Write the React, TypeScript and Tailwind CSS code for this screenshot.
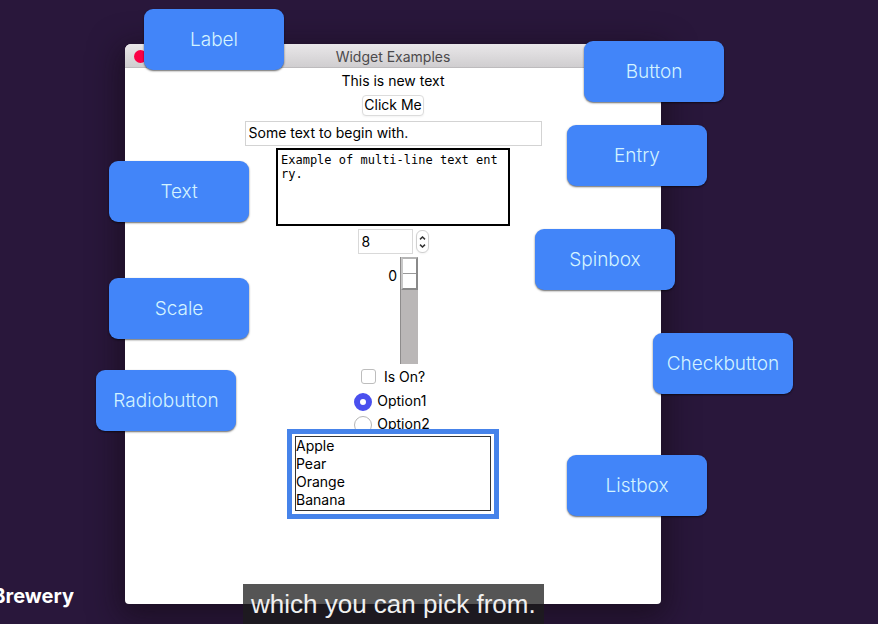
import { useState } from "react";

const tags = [
  { text: "Label", place: "left-[19px] top-[-35px]" },
  { text: "Text", place: "left-[-16px] top-[117px]" },
  { text: "Scale", place: "left-[-16px] top-[234px]" },
  { text: "Radiobutton", place: "left-[-29px] top-[326px]" },
  { text: "Button", place: "right-[-63px] top-[-3px]" },
  { text: "Entry", place: "right-[-46px] top-[81px]" },
  { text: "Spinbox", place: "right-[-14px] top-[185px]" },
  { text: "Checkbutton", place: "right-[-132px] top-[289px]" },
  { text: "Listbox", place: "right-[-46px] top-[411px]" },
];

function Tag({ text, place }: { text: string; place: string }) {
  return (
    <div
      className={`absolute flex h-[61px] w-[140px] items-center justify-center rounded-[9px] bg-[#4285f9] text-[19px] font-light text-[#d3f3ff] shadow-[0_1px_2px_rgba(0,0,0,0.6)] ${place}`}
    >
      {text}
    </div>
  );
}

function Spinbox() {
  const [value, setValue] = useState(8);
  return (
    <div className="mt-[3px] flex h-[25px] items-center gap-[3px]">
      <input
        type="number"
        aria-label="Spinbox"
        value={value}
        onChange={(e) => setValue(Number(e.target.value))}
        className="h-full w-[55px] appearance-none border border-[#d9d9d9] bg-white px-[3px] outline-none [appearance:textfield] [&::-webkit-inner-spin-button]:appearance-none"
      />
      <div className="flex h-[23px] w-[13px] flex-col overflow-hidden rounded-md border border-[#d0d0d0] bg-white shadow-xs">
        <button aria-label="Increase" onClick={() => setValue(value + 1)} className="flex flex-1 items-end justify-center pb-[2px]">
          <svg width="7" height="4" viewBox="0 0 7 4" fill="none" stroke="#333" strokeWidth="1.5">
            <path d="M1 3.4 3.5 1 6 3.4" />
          </svg>
        </button>
        <button aria-label="Decrease" onClick={() => setValue(value - 1)} className="flex flex-1 items-start justify-center pt-[2px]">
          <svg width="7" height="4" viewBox="0 0 7 4" fill="none" stroke="#333" strokeWidth="1.5">
            <path d="M1 .6 3.5 3 6 .6" />
          </svg>
        </button>
      </div>
    </div>
  );
}

function Scale() {
  const [value, setValue] = useState(0);
  return (
    <div className="mt-[3px] flex h-[107px] w-[50px] justify-end gap-[3px]">
      <output htmlFor="scale" className="pt-[9px]">{value}</output>
      <input
        id="scale"
        type="range"
        min={0}
        max={100}
        value={value}
        aria-label="Scale"
        onChange={(e) => setValue(Number(e.target.value))}
        className="m-0 h-full w-[18px] appearance-none border-l border-[#8e8c8c] bg-[#bab7b7] [writing-mode:vertical-lr] [&::-webkit-slider-thumb]:h-[33px] [&::-webkit-slider-thumb]:w-[17px] [&::-webkit-slider-thumb]:appearance-none [&::-webkit-slider-thumb]:border-2 [&::-webkit-slider-thumb]:border-t-[#b5b5b5] [&::-webkit-slider-thumb]:border-r-[#8a8a8a] [&::-webkit-slider-thumb]:border-b-[#8a8a8a] [&::-webkit-slider-thumb]:border-l-[#c8c8c8] [&::-webkit-slider-thumb]:bg-[linear-gradient(#fff_14px,#999_14px,#999_15px,#fff_15px)]"
      />
    </div>
  );
}

function Radio({ label, checked, onSelect }: { label: string; checked: boolean; onSelect: () => void }) {
  return (
    <label className="flex h-[23px] items-center gap-[5px]">
      <input
        type="radio"
        name="option"
        checked={checked}
        onChange={onSelect}
        className="mt-[2px] size-[18px] appearance-none rounded-full border border-[#b5b5b5] bg-white checked:border-[6px] checked:border-[#4a50ee]"
      />
      {label}
    </label>
  );
}

export default function App() {
  const [on, setOn] = useState(false);
  const [option, setOption] = useState(1);
  return (
    <main className="relative min-h-screen overflow-hidden bg-[#29173b] pt-11 pr-[217px] pb-5 pl-[125px] font-['Inter',sans-serif] text-sm text-black">
      <div className="relative">
        <section className="flex min-h-[560px] flex-col items-center rounded-t-md rounded-b-sm bg-white shadow-[0_8px_30px_6px_rgba(20,10,20,0.6)]">
          <header className="flex h-6 w-full items-center rounded-t-md border-b border-[#bdbbbd] bg-linear-to-b from-[#e9e7e9] to-[#d0ced0] px-[9px] pt-[2px]">
            <span className="size-[13px] rounded-full bg-[#fb0046]" />
            <h1 className="flex-1 pr-[13px] text-center text-[#4c4a4c]">Widget Examples</h1>
          </header>

          <p className="mt-px leading-6">This is new text</p>
          <button className="mt-[2px] h-[21px] rounded border border-[#dcdcdc] bg-white px-px pb-[2px] leading-[17px] shadow-xs">Click Me</button>
          <input
            type="text"
            aria-label="Entry"
            defaultValue="Some text to begin with."
            className="mt-[5px] h-[25px] w-[297px] border border-[#d3d3d3] bg-white px-[3px] pb-[2px] outline-none"
          />
          <textarea
            aria-label="Text"
            defaultValue="Example of multi-line text entry."
            className="mt-[2px] h-[78px] w-[234px] resize-none border-2 border-black bg-white py-[3px] pr-[5px] pl-[3px] font-['DejaVu_Sans_Mono',monospace] text-xs leading-[14px] break-all outline-none"
          />
          <Spinbox />
          <Scale />
          <label className="mt-px flex h-[23px] items-center gap-2">
            <input
              type="checkbox"
              checked={on}
              onChange={() => setOn(!on)}
              className="size-[15px] appearance-none rounded-[3px] border border-[#bdbdbd] bg-white checked:bg-[#4a50ee]"
            />
            Is On?
          </label>
          <div className="mt-px pr-[2px]">
            <Radio label="Option1" checked={option === 1} onSelect={() => setOption(1)} />
            <Radio label="Option2" checked={option === 2} onSelect={() => setOption(2)} />
          </div>
          <div className="relative mt-[-6px] flex h-[90px] w-[212px] items-start justify-center border-[5px] border-[#4683ea] bg-white pt-[2px]">
            <select multiple size={4} aria-label="Listbox" className="h-[75px] w-[196px] appearance-none overflow-hidden border border-[#333] bg-white p-0 outline-none">
              {["Apple", "Pear", "Orange", "Banana"].map((fruit) => (
                <option key={fruit} className="min-h-[18px] p-0">{fruit}</option>
              ))}
            </select>
          </div>
        </section>

        {tags.map((tag) => (
          <Tag key={tag.text} {...tag} />
        ))}
      </div>

      <div className="absolute bottom-4 left-0 flex w-[74px] justify-end overflow-hidden text-xl leading-6 font-bold text-white">
        Brewery
      </div>
      <p className="absolute bottom-0 left-[243px] bg-[#1c1c1c]/75 px-2 font-['Liberation_Sans',sans-serif] text-[26px] leading-10 text-[#f0f0f0]">
        which you can pick from.
      </p>
    </main>
  );
}
